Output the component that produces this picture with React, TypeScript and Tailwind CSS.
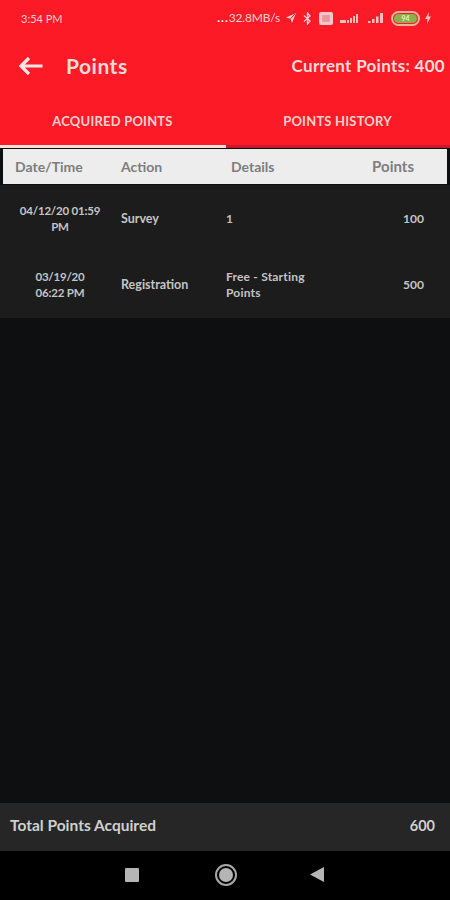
import React from "react";

function StatusIcons() {
  return (
    <div className="flex items-center text-[#f6cfcf]">
      <span className="text-[12px] leading-none tracking-[-0.2px] mr-[5px]">
        <span className="font-bold text-white tracking-[1px]">...</span>32.8MB/s
      </span>
      <svg width="12" height="12" viewBox="0 0 12 12" className="mr-[6px]">
        <path d="M11 1 1 5.500l4.500 1.200L7 11z" fill="#f6cfcf" />
        <path d="M10 2 5.500 6.700" stroke="#fb1a26" strokeWidth="1" />
      </svg>
      <svg width="9" height="13" viewBox="0 0 9 13" className="mr-[7px]">
        <path d="M1 3.500 7 9 4.500 12V1L7 4 1 9.500" fill="none" stroke="#f6cfcf" strokeWidth="1.300" />
      </svg>
      <div className="w-[14px] h-[13px] rounded-[2px] bg-[#f3c7c7] mr-[6px] flex items-center justify-center">
        <div className="w-[8px] h-[7px] bg-[#e99a9c] rounded-[1px]" />
      </div>
      <svg width="21" height="13" viewBox="0 0 21 13" className="mr-[7px]">
        <path d="M1 8h6v3H1zM8 11V8h2v3zM11 11V6h2v5zM14 11V4h2v7zM17 11V2h2v9z" fill="#f3c0c0" />
      </svg>
      <svg width="18" height="13" viewBox="0 0 18 13" className="mr-[6px]">
        <path d="M1 11V9h2.500v2zM5 11V7h2.500v4zM9 11V4.500h2.500V11zM13 11V1h3v10z" fill="#f3c0c0" />
      </svg>
      <div className="w-[29px] h-[15px] rounded-full border-2 border-[#e3b6a0] flex items-center justify-center mr-[4px] p-px">
        <div className="w-full h-full rounded-full bg-[#8cb04a] text-[7px] leading-[9px] text-center font-bold text-[#e6f0c8]">94</div>
      </div>
      <svg width="8" height="12" viewBox="0 0 8 12">
        <path d="M5 0 1 7h2.500L3 12l4-7.500H4.500z" fill="#f3c0c0" />
      </svg>
    </div>
  );
}

const rowText = "text-[12px] leading-[16px] font-bold text-[#c4c4c4]";

function Row({ date, action, details, points, h }: { date: string[]; action: string; details: string[]; points: string; h: string }) {
  return (
    <div className={`flex items-center pl-[15px] pr-[26px] pt-[2px] ${h} ${rowText}`}>
      <div className="w-[90px] text-center mr-[16px] whitespace-nowrap text-[11.500px] tracking-[-0.2px]">
        {date.map((d) => (
          <div key={d}>{d}</div>
        ))}
      </div>
      <div className="w-[105px] text-[12.500px]">{action}</div>
      <div className="flex-1 whitespace-nowrap tracking-[0.2px]">
        {details.map((d) => (
          <div key={d}>{d}</div>
        ))}
      </div>
      <div>{points}</div>
    </div>
  );
}

export default function App() {
  return (
    <div className="w-[450px] h-[900px] flex flex-col bg-[#0e0f11] overflow-hidden" style={{ fontFamily: '"Lato", "Liberation Sans", sans-serif' }}>
      <div className="bg-[#fb1a26] h-[148px] flex flex-col shrink-0">
        <div className="h-[34px] pt-[2px] pl-[21px] pr-[18px] flex items-center justify-between">
          <span className="text-[11px] text-[#f6cfcf] leading-none">3:54 PM</span>
          <StatusIcons />
        </div>
        <div className="h-[64px] pb-[1px] pl-[18px] pr-[5px] flex items-center justify-between text-[#f8dada]">
          <div className="flex items-center">
            <svg width="26" height="20" viewBox="0 0 26 20" className="mr-[22px]">
              <path d="M24.500 10H3M11 2 3 10l8 8" fill="none" stroke="#fbe6e6" strokeWidth="3.200" />
            </svg>
            <span className="text-[21px] font-bold leading-none tracking-[0.5px]">Points</span>
          </div>
          <span className="text-[17px] font-bold leading-none tracking-[0.3px]">Current Points: 400</span>
        </div>
        <div className="flex-1 flex text-[13px] font-bold text-[#f6d0d0] tracking-[0.2px]">
          <div className="w-[226px] flex flex-col">
            <div className="flex-1 flex items-center justify-center pr-[1px] pt-[1px]">ACQUIRED POINTS</div>
            <div className="h-[3px] bg-[#fbe0d8]" />
          </div>
          <div className="flex-1 flex flex-col">
            <div className="flex-1 flex items-center justify-center pt-[1px] pr-[1px]">POINTS HISTORY</div>
            <div className="h-[3px] bg-[#c81a2c]" />
          </div>
        </div>
      </div>

      <div className="mx-[3px] mt-[1px] h-[35px] shrink-0 bg-[#ededed] flex items-center pl-[12px] pr-[33px] text-[14px] font-bold text-[#7d7d7d]">
        <div className="w-[106px]">Date/Time</div>
        <div className="w-[110px]">Action</div>
        <div className="flex-1">Details</div>
        <div className="text-[15px]">Points</div>
      </div>

      <div className="bg-[#1c1c1d] mt-[1px]">
        <Row date={["04/12/20 01:59", "PM"]} action="Survey" details={["1"]} points="100" h="h-[65px]" />
        <Row date={["03/19/20", "06:22 PM"]} action="Registration" details={["Free - Starting", "Points"]} points="500" h="h-[68px]" />
      </div>

      <div className="flex-1" />

      <div className="h-[48px] shrink-0 bg-[#262626] flex items-center justify-between pl-[10px] pr-[15px] pb-[3px] text-[15.500px] font-bold text-[#d0d0d0]">
        <span>Total Points Acquired</span>
        <span className="text-[14.500px]">600</span>
      </div>

      <div className="h-[49px] shrink-0 bg-black flex items-center justify-center pb-[2px] pr-[2px] text-[#bdbdbd]">
        <div className="w-[14px] h-[14px] bg-[#b5b5b5] rounded-[1px] mr-[76px]" />
        <div className="w-[22px] h-[22px] rounded-full border-2 border-[#a8a8a8] flex items-center justify-center mr-[73px]">
          <div className="w-[14px] h-[14px] rounded-full bg-[#b5b5b5]" />
        </div>
        <svg width="14" height="15" viewBox="0 0 14 15">
          <path d="M14 0v15L0 7.500z" fill="#b5b5b5" />
        </svg>
      </div>
    </div>
  );
}
